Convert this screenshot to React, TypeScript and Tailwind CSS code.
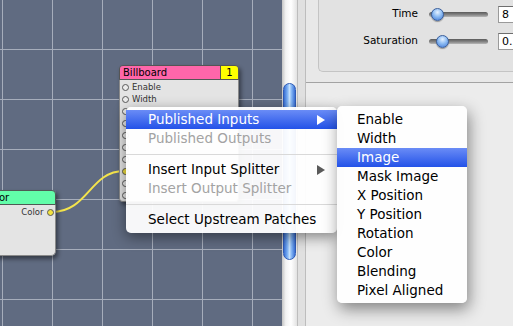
const font = { fontFamily: '"DejaVu Sans", "Liberation Sans", sans-serif' };

const billboardPorts = [
  "Enable",
  "Width",
  "Image",
  "Mask Image",
  "X Position",
  "Y Position",
  "Rotation",
  "Color",
  "Blending",
  "Pixel Aligned",
];

function Arrow({ color }: { color: string }) {
  return (
    <svg width="8" height="10" viewBox="0 0 8 10">
      <path d="M0 0 L8 5 L0 10 Z" fill={color} />
    </svg>
  );
}

function Knob() {
  return (
    <div className="w-[13px] h-[13px] rounded-full border border-[#3a5f9c] bg-[radial-gradient(circle_at_50%_30%,#e4f1ff_0%,#8fbdf3_45%,#3f78d6_100%)] shadow-[0_1px_1px_rgba(0,0,0,0.35)]" />
  );
}

function SliderRow({ label, value, knob }: { label: string; value: string; knob: number }) {
  return (
    <div className="flex items-center h-[20px] shrink-0">
      <div className="w-[99px] shrink-0 text-right text-[10.5px] text-black">{label}</div>
      <div className="relative ml-[11px] w-[59px] h-[13px] shrink-0">
        <div className="absolute left-0 right-0 top-[4px] h-[5px] rounded-full bg-[linear-gradient(to_bottom,#5a5a5a,#8a8a8a_60%,#b8b8b8)]" />
        <div className="absolute top-0" style={{ left: knob }}>
          <Knob />
        </div>
      </div>
      <div className="ml-[10px] w-[40px] h-[17px] shrink-0 bg-white border border-[#9a9a9a] border-t-[#6e6e6e] pl-[3px] text-[11px] leading-[15px] text-black">
        {value}
      </div>
    </div>
  );
}

export default function App() {
  return (
    <div className="relative flex w-[513px] h-[326px] overflow-hidden bg-[#ececec]" style={font}>
      {/* patch canvas */}
      <div className="relative shrink-0 w-[282px] h-full bg-[#606b81] bg-[linear-gradient(to_right,#a6adbb_1px,transparent_1px),linear-gradient(to_bottom,#a6adbb_1px,transparent_1px)] bg-[size:50px_50px] bg-[position:2px_49px]">
        <svg className="absolute inset-0" width="282" height="326">
          <path d="M52 212 C 88 212, 90 171, 124 171" stroke="#f4e44c" strokeWidth="2" fill="none" />
        </svg>

        {/* Color node */}
        <div className="absolute left-[-22px] top-[190px] w-[78px] shadow-[2px_3px_4px_rgba(0,0,0,0.45)] rounded-br-[5px]">
          <div className="h-[15px] bg-[#62fda9] border border-[#4f5a55] rounded-tr-[4px] pl-[4px] text-[10px] leading-[13px] text-black">
            Color
          </div>
          <div className="h-[51px] bg-[#e4e4e4] border-x border-b border-[#8a8a8a] rounded-br-[5px] pt-[1px]">
            <div className="flex items-center justify-end h-[12px] pr-[1.5px] gap-[3px]">
              <span className="text-[8.5px] text-[#333]">Color</span>
              <span className="w-[7px] h-[7px] rounded-full border border-[#5a5a5a] bg-[#f3e23f]" />
            </div>
          </div>
        </div>

        {/* Billboard node */}
        <div className="absolute left-[119px] top-[65px] w-[120px] rounded-[4px] shadow-[2px_3px_4px_rgba(0,0,0,0.45)]">
          <div className="flex h-[15px] rounded-t-[4px] border border-[#555] overflow-hidden">
            <div className="flex-1 bg-[#ff66aa] pl-[3px] text-[10px] leading-[13px] text-black">Billboard</div>
            <div className="w-[18px] bg-[#ffff00] border-l border-[#555] text-center text-[10px] leading-[13px] text-black">
              1
            </div>
          </div>
          <div className="h-[122px] bg-[#e4e4e4] border-x border-b border-[#8a8a8a] rounded-b-[4px] pt-[1px]">
            {billboardPorts.map((p, i) => (
              <div key={p} className="flex items-center h-[12px] pl-[2px] gap-[3px]">
                <span
                  className={
                    i === 7
                      ? "w-[7px] h-[7px] rounded-full border border-[#5a5a5a] bg-[#f3e23f]"
                      : "w-[7px] h-[7px] rounded-full border border-[#5a5a5a] bg-[#ececec]"
                  }
                />
                {i < 2 && <span className="text-[8.5px] text-[#333]">{p}</span>}
              </div>
            ))}
          </div>
        </div>
      </div>

      {/* scroll track */}
      <div className="shrink-0 w-[15px] h-full pt-[83px] bg-[linear-gradient(to_right,#c4c4c4,#f2f2f2_25%,#ffffff_60%,#e2e2e2)]">
        <div className="mx-[1px] h-[177px] rounded-full border border-[#2f5bb5] bg-[linear-gradient(to_right,#3a6fd3,#79aef3_30%,#c3e0fd_50%,#7fb2f4_70%,#3a6fd3)]" />
      </div>

      {/* splitter */}
      <div className="shrink-0 w-[9px] h-full bg-[#e0e0e0] border-l border-r border-[#bdbdbd]" />

      {/* inspector */}
      <div className="flex-1 min-w-0 overflow-hidden flex flex-col">
        <div className="h-[83px] shrink-0 bg-[#e8e8e8] border-b border-[#a3a3a3] pl-[12px]">
          <div className="-mt-[8px] w-[260px] h-[80px] bg-[#e2e2e2] border-l border-b border-[#c4c4c4] rounded-bl-[5px] pt-[12px] flex flex-col gap-[7px]">
            <SliderRow label="Time" value="8" knob={2} />
            <SliderRow label="Saturation" value="0.5" knob={7} />
          </div>
        </div>
        <div className="flex-1 bg-[#ececec]" />
      </div>

      {/* context menu */}
      <div className="absolute left-[126px] top-[107px] w-[211px] pt-[3px] pb-[4px] rounded-[5px] bg-white/95 shadow-[0_4px_14px_rgba(0,0,0,0.45)] text-[13.5px] leading-[19px]">
        <div className="flex items-center justify-between h-[19px] pl-[22px] pr-[12px] text-white bg-[linear-gradient(to_bottom,#6a8cf6,#2352e8)]">
          <span>Published Inputs</span>
          <Arrow color="#ffffff" />
        </div>
        <div className="h-[19px] pl-[22px] text-[#a3a3a3]">Published Outputs</div>
        <div className="h-[12px] flex items-center">
          <div className="w-full h-px bg-[#d9d9d9]" />
        </div>
        <div className="flex items-center justify-between h-[19px] pl-[22px] pr-[12px] text-black">
          <span>Insert Input Splitter</span>
          <Arrow color="#5a5a5a" />
        </div>
        <div className="h-[19px] pl-[22px] text-[#a3a3a3]">Insert Output Splitter</div>
        <div className="h-[12px] flex items-center">
          <div className="w-full h-px bg-[#d9d9d9]" />
        </div>
        <div className="h-[19px] pl-[22px] text-black">Select Upstream Patches</div>
      </div>

      {/* submenu */}
      <div className="absolute left-[337px] top-[106px] w-[130px] pt-[4px] pb-[3px] rounded-[5px] bg-white/95 shadow-[2px_6px_16px_rgba(0,0,0,0.45)] text-[13.5px] leading-[19px] text-black">
        {billboardPorts.map((p) =>
          p === "Image" ? (
            <div key={p} className="h-[19px] pl-[20px] text-white bg-[linear-gradient(to_bottom,#6a8cf6,#2352e8)]">
              {p}
            </div>
          ) : (
            <div key={p} className="h-[19px] pl-[20px]">
              {p}
            </div>
          )
        )}
      </div>
    </div>
  );
}
